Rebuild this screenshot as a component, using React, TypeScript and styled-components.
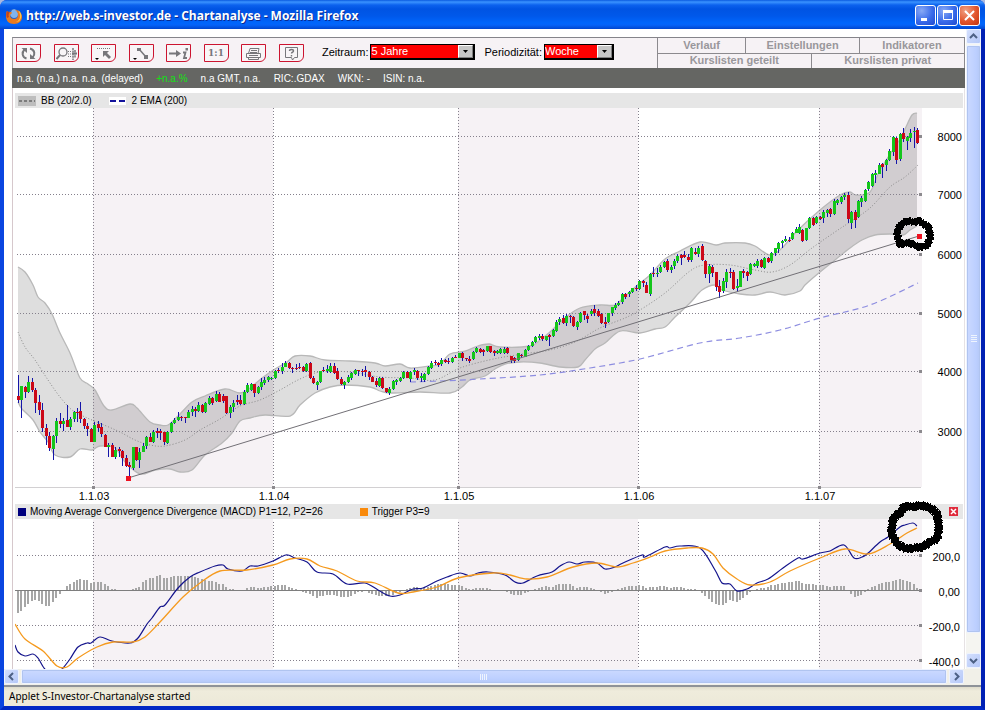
import React from "react";
import styled, { createGlobalStyle } from "styled-components";

const GlobalStyle = createGlobalStyle`
  *, *::before, *::after { box-sizing: border-box; }
  body {
    margin: 0;
    background: #a9b8e0;
    font-family: "Liberation Sans", Arial, sans-serif;
    font-size: 11px;
    color: #000;
  }
  button, select { font: inherit; margin: 0; padding: 0; border: 0; border-radius: 0; }
`;

/* ---------- window frame ---------- */

const Window = styled.div`
  display: flex;
  flex-direction: column;
  height: 100vh;
  min-height: 400px;
  overflow: hidden;
  border-radius: 7px 7px 0 0;
  background: #0a3fdc;
`;

const TitleBar = styled.header`
  display: flex;
  align-items: center;
  flex: none;
  height: 29px;
  padding: 2px 5px 0 6px;
  gap: 4px;
  background: linear-gradient(
    #0a5ae0 0, #3a93ff 2px, #0c62ee 5px, #0054e3 9px, #0058ea 16px, #0066fc 23px, #0563f8 25px, #0046cf 29px
  );
`;

const Title = styled.h1`
  flex: 1;
  margin: 0;
  overflow: hidden;
  white-space: nowrap;
  font: bold 12px/18px "Open Sans", "Noto Sans", sans-serif;
  color: #fff;
  text-shadow: 1px 1px 0 #0b2a91;
`;

const WindowButtons = styled.div`
  display: flex;
  gap: 1px;
`;

const WindowButton = styled.button<{ $close?: boolean }>`
  display: grid;
  place-items: center;
  width: 21px;
  height: 21px;
  border: 1px solid #fff;
  border-radius: 3px;
  background: ${(p) =>
    p.$close
      ? "radial-gradient(circle at 30% 25%, #f0a184, #e2552c 55%, #c2350f)"
      : "radial-gradient(circle at 30% 25%, #88a9f5, #3a6bea 55%, #1d49cf)"};
`;

const WindowBody = styled.div`
  display: flex;
  flex-direction: column;
  flex: 1;
  min-height: 0;
  border: 4px solid #0a3fdc;
  border-top: 0;
  border-color: #0a3fdc #0020b4 #0028c4 #0a45e0;
  background: #fff;
`;

const Viewport = styled.div`
  display: flex;
  flex: 1;
  min-height: 0;
`;

const Page = styled.main`
  flex: 1;
  min-width: 0;
  overflow: hidden;
  padding: 8px 1px 0 8px;
  background: #fff;
`;

/* ---------- scroll bars ---------- */

const VerticalBar = styled.div`
  display: flex;
  flex-direction: column;
  flex: none;
  width: 15px;
  padding-bottom: 1px;
  background: #f5f5f1;
`;

const HorizontalBar = styled.div`
  display: flex;
  flex: none;
  height: 16px;
  padding: 0 17px 1px 0;
  background: #f1f0e8;
`;

const ArrowButton = styled.button`
  display: grid;
  place-items: center;
  flex: none;
  width: 15px;
  height: 15px;
  border: 1px solid #eef3ff;
  border-radius: 2px;
  background: linear-gradient(135deg, #d3dffd, #b5c8f8);
`;

const Thumb = styled.div<{ $vertical?: boolean }>`
  display: flex;
  align-items: center;
  justify-content: center;
  flex: 1;
  margin: ${(p) => (p.$vertical ? "1px 0 20px" : "0 2px")};
  border: 1px solid #eef3ff;
  outline: 1px solid #b0c4f0;
  outline-offset: -2px;
  border-radius: 2px;
  background: linear-gradient(${(p) => (p.$vertical ? "90deg" : "180deg")}, #cbd9ff, #bccfff 70%, #b4c8f6);
`;

/* ---------- applet toolbar ---------- */

const Toolbar = styled.div`
  display: flex;
  height: 31px;
  border-top: 1px solid #85848a;
  border-left: 1px solid #a09ea2;
  background: #f6f2f5;
`;

const ToolGrid = styled.div`
  display: grid;
  grid-template-columns: repeat(8, 1fr);
  align-items: center;
  flex: none;
  width: 300px;
  margin-left: 3px;
`;

const ToolButton = styled.button`
  display: grid;
  place-items: center;
  width: 25px;
  height: 18px;
  border: 1px solid #cc1430;
  border-radius: 0 0 6px 0;
  background: #f8f5f7;
  color: #77777b;
`;

const Ratio = styled.span`
  font: bold 9px/14px "DejaVu Serif", "Liberation Serif", serif;
`;

const Field = styled.div`
  display: flex;
  align-items: center;
  gap: 2px;
  margin: 0 3px 0 6px;
  padding-bottom: 2px;
`;

const FieldLabel = styled.label`
  white-space: nowrap;
`;

const SelectBox = styled.div<{ $width: number }>`
  display: flex;
  position: relative;
  width: ${(p) => p.$width}px;
  height: 16px;
  border: 1px solid #000;
  border-right-width: 2px;
  border-bottom-width: 2px;
`;

const Select = styled.select`
  appearance: none;
  flex: 1;
  min-width: 0;
  height: 13px;
  line-height: 13px;
  background: #fe0000;
  color: #fff;
`;

const SelectArrow = styled.span`
  position: absolute;
  right: 0;
  top: 0;
  display: grid;
  place-items: center;
  width: 15px;
  height: 13px;
  border: 1px solid;
  border-color: #fff #808080 #808080 #fff;
  background: #c6c6c6;
  pointer-events: none;
`;

const Tabs = styled.nav`
  flex: none;
  width: 308px;
  margin-left: auto;
  border-left: 1px solid #8c8a8e;
  border-right: 1px solid #8c8a8e;
`;

const TabRow = styled.div`
  display: flex;
  height: 15px;

  & + & { border-top: 1px solid #8c8a8e; }
`;

const Tab = styled.button<{ $grow: number }>`
  flex: ${(p) => p.$grow} 1 0;
  padding-bottom: 2px;
  line-height: 12px;
  font-weight: bold;
  color: #99979b;
  background: transparent;

  & + & { border-left: 1px solid #8c8a8e; }
`;

const InfoBar = styled.div`
  display: flex;
  align-items: center;
  gap: 13px;
  height: 20px;
  padding-left: 5px;
  font-size: 10px;
  white-space: nowrap;
  background: #656663;
  color: #fff;
`;

const Change = styled.span`
  color: #12e212;
`;

/* ---------- charts ---------- */

const Charts = styled.section`
  position: relative;
  padding: 5px 1px 0 2px;
  border-left: 1px solid #d6c8cc;
  border-right: 1px solid #e6e2e4;
`;

const Legend = styled.div`
  display: flex;
  align-items: center;
  height: 15px;
  padding: 0 5px 0 3px;
  font-size: 10px;
  background: #e6e6e6;
`;

const LegendItem = styled.span<{ $gap: number }>`
  display: flex;
  align-items: center;
  gap: ${(p) => p.$gap}px;
  margin-right: 17px;
  white-space: nowrap;
`;

const TriggerItem = styled(LegendItem)`
  padding-left: 20px;
`;

const Swatch = styled.i<{ $color: string }>`
  width: 8px;
  height: 8px;
  background: ${(p) => p.$color};
`;

const CloseIndicator = styled.button`
  display: grid;
  place-items: center;
  width: 9px;
  height: 9px;
  margin-left: auto;
  background: #e02b3c;
`;

const ChartSvg = styled.svg`
  display: block;
  width: 100%;
  height: auto;

  text { font-size: 11px; fill: #000; }
`;

const Annotations = styled.svg`
  position: absolute;
  top: 5px;
  left: 2px;
  width: calc(100% - 3px);
  pointer-events: none;
`;

const StatusBar = styled.footer`
  flex: none;
  height: 21px;
  padding-left: 5px;
  border-top: 2px solid #8e9298;
  font: 10px/18px "Noto Sans", "Open Sans", sans-serif;
  background: linear-gradient(#dedbcb, #efecdc 4px, #ece9d8);
`;

/* ---------- data ---------- */

// One week per entry: direction, then high, body top, body bottom and low on the plot's y scale.
const WEEKS = `
r375,396,400,403 g386,386,400,418 r386,387,392,398 g376,382,392,393 r378,382,390,392 r388,390,403,413
r395,402,410,415 r403,410,428,432 r424,428,436,445 r432,436,448,451 g435,436,449,460 g418,421,436,443
r413,421,424,428 g418,421,424,431 r405,420,427,427 g417,419,427,430 g411,412,419,422 r408,412,413,422
r402,411,419,423 r418,419,426,429 r423,426,429,436 r428,429,442,442 g422,425,442,442 r421,424,428,432
r423,427,434,437 r434,435,447,447 g443,445,447,457 r443,445,457,457 g447,450,457,459 r447,449,451,457
r450,451,458,466 r455,458,466,467 r462,465,467,477 g447,447,468,470 r447,447,460,461 g448,452,460,468
g443,446,452,452 g436,437,446,449 r433,437,442,442 g430,432,442,443 r428,431,433,438 r429,431,433,440
r432,432,442,445 g431,432,443,444 g422,423,432,433 g418,420,423,424 g412,417,420,421 r416,417,418,421
r417,417,418,423 g410,412,418,418 g406,409,412,416 r407,409,411,417 g402,405,411,412 r404,405,412,413
g402,403,412,413 g396,398,404,405 r397,398,403,405 g391,394,401,402 r392,394,402,402 r394,396,401,403
r396,396,413,414 g405,407,413,418 g400,403,407,412 r395,400,402,405 r395,400,404,405 g390,392,404,405
g383,385,392,393 g383,384,390,391 r384,384,393,397 g386,387,393,394 g378,382,387,390 g377,380,383,385
g376,377,380,382 g377,378,379,380 g370,371,378,379 r368,370,371,373 g363,367,371,374 g361,363,367,367
r362,363,368,369 r367,368,369,373 r364,368,369,370 r363,367,368,369 r366,367,371,372 g363,364,371,372
r362,363,378,379 r376,378,383,384 g381,382,385,390 g371,371,382,383 r367,370,371,372 g365,369,371,373
g363,366,372,373 r363,366,373,374 r368,371,379,380 r377,379,384,385 g381,382,385,389 g375,377,382,383
g372,373,378,380 g369,370,374,375 r370,370,371,376 r369,371,371,376 r366,370,372,377 r371,372,377,380
r376,377,382,382 r378,381,385,387 g377,378,386,387 r377,378,388,389 r388,388,392,393 g387,389,393,395
g380,381,389,390 g379,380,382,385 g377,378,381,382 g371,372,378,379 r371,372,378,378 g371,372,379,382
g368,370,372,375 r370,371,378,380 g373,376,378,382 g373,374,380,382 g366,367,374,375 g361,363,368,369
r360,362,363,365 r362,363,365,367 g358,360,364,366 r359,360,362,363 r358,361,362,364 g357,358,362,363
r355,357,358,358 g353,353,358,358 r352,353,358,361 r358,358,359,361 r356,359,361,363 g351,352,359,360
g347,348,352,353 r348,349,352,353 r349,350,352,356 g346,346,351,352 r346,346,352,353 r350,351,353,356
g350,351,353,354 g348,349,353,354 g347,349,353,354 r347,348,353,354 r356,356,360,363 r357,358,361,363
g353,353,360,361 r354,355,356,358 g349,350,357,357 g345,346,350,351 g341,342,346,347 g336,337,342,343
g334,336,338,340 r334,336,339,341 g336,336,340,341 r334,335,337,346 g329,330,336,337 g320,322,331,332
g317,319,322,325 r315,318,323,324 g314,316,323,326 r315,316,317,323 r316,317,326,327 g321,322,327,330
g312,313,322,323 r311,311,315,320 r314,316,319,323 g309,311,314,316 r305,309,313,316 r309,311,316,317
r313,314,323,324 r317,322,324,328 g313,313,322,323 g307,307,313,316 g303,305,308,310 g301,303,305,306
g293,294,302,304 r293,294,297,299 g291,292,294,297 g288,288,292,293 r285,288,289,291 g280,281,289,290
r280,281,283,287 r282,285,293,293 g273,274,294,296 r267,273,274,277 g268,273,274,277 g265,267,272,273
g261,262,267,268 r259,261,270,272 g265,267,270,273 g259,261,266,269 g254,256,261,263 r254,255,258,265
r251,255,257,258 r254,257,260,262 g247,248,260,262 r248,252,254,255 g246,248,254,257 r244,246,260,261
r260,261,274,278 g264,266,274,283 r265,267,273,277 r272,272,287,291 r280,286,292,298 g278,281,291,293
g269,272,282,288 r268,272,273,278 r270,272,289,290 g279,286,288,292 g271,271,287,287 r269,271,273,278
r271,272,276,281 g263,264,274,275 g263,264,266,267 g259,261,266,268 r259,260,267,268 g257,258,268,269
r257,258,262,263 g252,253,261,263 g248,248,253,256 g242,243,249,253 g240,241,243,248 g236,239,241,242
r237,240,241,242 g232,233,239,240 g227,229,233,233 g224,227,233,234 r229,230,241,242 g228,228,240,241
g217,218,228,229 r217,218,225,226 g216,217,223,224 r216,217,219,220 g210,212,218,223 g209,210,213,217
r208,209,214,217 g199,201,214,215 g199,200,203,205 g196,197,202,204 g193,195,197,200 r192,195,219,223
g211,212,223,229 r210,212,220,228 g200,201,217,218 g196,198,202,207 g189,190,201,202 g181,182,189,191
g173,174,186,187 g170,173,175,183 g163,165,174,174 r163,164,167,178 g159,160,165,171 g149,151,160,161
g136,137,152,156 r137,138,160,164 g133,134,159,161 r128,133,139,142 g136,137,141,150 g129,133,138,142
g127,131,132,148 r128,130,143,144`
  .trim()
  .split(/\s+/)
  .map((w) => ({ up: w[0] === "g", v: w.slice(1).split(",").map(Number) }));

const FIRST_X = 18;
const LAST_X = 917;
const weekX = (i: number) => Math.round(FIRST_X + (i * (LAST_X - FIRST_X)) / (WEEKS.length - 1));

const parse = (s: string) => s.split(" ").map((p) => p.split(",").map(Number));

const BAND_UPPER = parse(
  "18,267 25,272 33,285 38,297 45,303 52,314 60,333 70,353 80,378 88,384 95,390 104,406 112,410 130,404 137,408 150,422 160,425 168,425 178,416 192,402 205,396 225,389 240,393 250,388 262,378 275,369 287,362 295,356 310,356 325,360 350,361 375,363 385,366 400,364 410,368 430,366 440,364 450,354 465,351 478,346 489,344 500,347 530,346 540,340 550,332 565,318 580,308 600,305 615,305 625,296 640,283 650,275 665,259 680,251 700,242 716,245 725,243 745,243 755,246 770,255 782,248 797,231 820,210 840,195 850,192 856,195 870,192 880,170 900,139 905,129 912,115 917,113"
);
const BAND_LOWER = parse(
  "18,402 22,409 33,420 40,432 48,442 55,455 70,457 80,449 92,450 100,446 115,448 125,462 140,474 155,470 170,469 180,472 192,470 205,455 222,443 232,433 240,421 250,418 265,415 290,416 300,405 315,393 330,387 345,385 370,387 380,391 390,393 420,392 450,393 462,387 470,380 485,376 495,369 505,364 520,362 540,363 560,367 578,367 585,360 595,349 605,343 620,331 640,333 655,329 665,327 675,317 690,303 702,290 715,285 722,290 740,294 755,295 770,292 785,295 800,291 805,285 820,272 835,260 850,248 862,240 875,235 890,234 903,235 910,230 917,226"
);
const BAND_MIDDLE = parse(
  "18,332 25,347 35,360 48,380 60,397 72,410 85,417 104,425 120,432 135,440 150,445 165,446 185,440 200,430 220,419 240,406 260,400 280,390 300,379 320,372 350,372 380,377 410,378 435,380 460,368 489,360 510,356 530,353 550,350 575,342 600,328 625,318 640,310 665,293 690,271 705,265 730,265 755,270 772,272 790,265 812,248 835,232 850,222 870,208 890,187 905,177 918,165"
);
const EMA = parse(
  "410,382 440,381 480,379 540,375 590,368 640,359 700,343 740,338 780,330 820,318 870,305 918,283"
);
const MACD = parse(
  "15,645 18,652 25,656 33,654 38,658 44,668 50,674 57,673 63,668 70,659 78,647 87,643 91,643 100,637 112,641 130,643 138,638 147,624 152,618 160,607 165,605 178,588 190,577 200,572 215,566 223,565 228,569 242,571 250,566 258,566 273,561 286,555 295,558 307,562 317,572 333,574 347,584 365,583 378,590 390,596 400,595 413,589 423,588 437,581 447,577 460,573 470,576 478,573 488,572 505,575 515,582 523,583 537,576 552,572 560,566 569,562 577,564 585,562 597,563 605,569 615,567 623,563 642,555 645,557 665,547 670,548 680,546 700,548 715,570 722,583 730,584 737,591 747,589 757,583 768,579 783,568 798,558 803,559 820,553 830,551 844,545 854,558 862,557 867,554 880,542 888,537 900,527 905,525 913,523 917,526"
);
const TRIGGER = parse(
  "15,624 25,639 43,651 57,666 67,667 78,658 97,647 113,642 133,642 145,637 160,622 183,597 200,583 220,571 247,570 273,565 290,559 307,559 320,566 337,571 357,581 375,583 398,593 413,592 437,587 458,578 493,573 510,575 527,579 547,577 573,567 597,563 617,567 633,563 650,557 665,551 687,548 702,548 713,554 723,568 737,579 750,585 770,582 790,571 820,558 845,549 868,554 890,544 907,533 917,528"
);

// Curve through every point, with tangents taken from the neighbours.
const curve = (points: number[][], start = "M") =>
  points
    .map(([x, y], i) => {
      if (i === 0) return `${start}${x} ${y}`;
      const before = points[Math.max(0, i - 2)];
      const prev = points[i - 1];
      const next = points[Math.min(points.length - 1, i + 1)];
      const c1 = [prev[0] + (x - before[0]) / 6, prev[1] + (y - before[1]) / 6];
      const c2 = [x - (next[0] - prev[0]) / 6, y - (next[1] - prev[1]) / 6];
      return `C${c1[0]} ${c1[1]} ${c2[0]} ${c2[1]} ${x} ${y}`;
    })
    .join("");

const BAND_AREA = `${curve(BAND_UPPER)}${curve([...BAND_LOWER].reverse(), "L")}Z`;

const valueAt = (points: number[][], x: number) => {
  const i = Math.max(1, points.findIndex((p) => p[0] >= x));
  const [x0, y0] = points[i - 1];
  const [x1, y1] = points[i];
  return y0 + ((y1 - y0) * (x - x0)) / (x1 - x0);
};

const HISTOGRAM = WEEKS.map((_, i) => {
  const x = weekX(i);
  return { x, h: Math.round(valueAt(TRIGGER, x) - valueAt(MACD, x)) };
});

const YEARS = [
  { x: 93, label: "1.1.03" },
  { x: 273, label: "1.1.04" },
  { x: 458, label: "1.1.05" },
  { x: 638, label: "1.1.06" },
  { x: 819, label: "1.1.07" },
];
const SHADED = [
  [93, 180],
  [458, 180],
  [819, 103],
];
const PRICES = [
  { y: 136, label: "8000" },
  { y: 194, label: "7000" },
  { y: 254, label: "6000" },
  { y: 313, label: "5000" },
  { y: 371, label: "4000" },
  { y: 431, label: "3000" },
];
const LEVELS = [
  { y: 555, label: "200,0" },
  { y: 590, label: "0,00" },
  { y: 625, label: "-200,0" },
  { y: 660, label: "-400,0" },
];

// Hand-drawn rings around the trend line's end and the latest MACD value.
const RINGS = [
  {
    width: 7,
    d: "M900 226l3-3 5-2 6 1 5-1 6 4 4 2 1 11-3 8-8 1-9-4-10 1-2-6-1-6z",
  },
  {
    width: 8,
    d: "M893 520l3-5 4-2 3-5 4-2 7 1 6-2 11 3 6 6 2 13-2 12-7 3-7 5-9 1-8 1-9-5-6-11 1-6z",
  },
];

function YearBands({ top, height }: { top: number; height: number }) {
  return (
    <>
      {SHADED.map(([x, w]) => (
        <rect key={x} x={x} y={top} width={w} height={height} fill="#f6f2f5" />
      ))}
    </>
  );
}

function Grid({ rows, top, bottom }: { rows: number[]; top: number; bottom: number }) {
  return (
    <g stroke="#85808c" strokeDasharray="1 2" shapeRendering="crispEdges">
      {rows.map((y) => (
        <line key={y} x1="17" x2="920" y1={y + 0.5} y2={y + 0.5} />
      ))}
      {YEARS.map(({ x }) => (
        <line key={x} x1={x + 0.5} x2={x + 0.5} y1={top} y2={bottom} />
      ))}
    </g>
  );
}

function PriceChart() {
  return (
    <ChartSvg viewBox="15 108 948 396" role="img" aria-label="Kursverlauf">
      <defs>
        <clipPath id="shaded-years">
          {SHADED.map(([x, w]) => (
            <rect key={x} x={x} y="108" width={w} height="380" />
          ))}
        </clipPath>
      </defs>
      <YearBands top={108} height={379} />
      <path d={BAND_AREA} fill="#000" fillOpacity="0.13" />
      <path d={BAND_AREA} fill="#000" fillOpacity="0.02" clipPath="url(#shaded-years)" />
      <path d={curve(BAND_UPPER)} fill="none" stroke="#b8b8b8" strokeWidth="1.3" />
      <path d={curve(BAND_LOWER)} fill="none" stroke="#b8b8b8" strokeWidth="1.3" />
      <Grid rows={PRICES.map((p) => p.y)} top={108} bottom={487} />
      <line x1="15" x2="921" y1="487.5" y2="487.5" stroke="#d2d0d2" />
      <path d={curve(BAND_MIDDLE)} fill="none" stroke="#8a8a8a" strokeDasharray="1 2" />
      <path d={curve(EMA)} fill="none" stroke="#8d8de0" strokeWidth="1.2" strokeDasharray="6 4" />
      <g shapeRendering="crispEdges">
        {WEEKS.map(({ up, v: [high, top, bottom, low] }, i) => (
          <g key={i}>
            <rect x={weekX(i)} y={high} width="1" height={low - high} fill="#1515a8" />
            <rect
              x={weekX(i) - 1}
              y={top}
              width="3"
              height={Math.max(1, bottom - top)}
              fill={up ? "#14c61c" : "#cc0818"}
            />
          </g>
        ))}
      </g>
      <line x1="128" y1="478" x2="919" y2="236" stroke="#727076" />
      <rect x="126" y="476" width="5" height="5" fill="#ee1020" />
      <rect x="917" y="234" width="5" height="5" fill="#ee1020" />
      {PRICES.map(({ y, label }) => (
        <g key={label}>
          <rect x="919" y={y - 1} width="3" height="3" fill="#8c8a8e" />
          <text x="962" y={y + 5} textAnchor="end">{label}</text>
        </g>
      ))}
      {YEARS.map(({ x, label }) => (
        <g key={label}>
          <rect x={x - 1} y="486" width="3" height="3" fill="#8c8a8e" />
          <text x={x + 1} y="500" textAnchor="middle">{label}</text>
        </g>
      ))}
    </ChartSvg>
  );
}

function MacdChart() {
  return (
    <ChartSvg viewBox="15 519 948 150" role="img" aria-label="MACD">
      <YearBands top={519} height={150} />
      <Grid rows={[555, 625, 660]} top={522} bottom={669} />
      <g fill="#a6a6a6" shapeRendering="crispEdges">
        {HISTOGRAM.map(({ x, h }) => (
          <rect key={x} x={x - 1} y={h > 0 ? 590 - h : 590} width="2" height={Math.abs(h)} />
        ))}
      </g>
      <line x1="15" x2="920" y1="590.5" y2="590.5" stroke="#7e7e7e" />
      <path d={curve(MACD)} fill="none" stroke="#14148c" strokeWidth="1.2" />
      <path d={curve(TRIGGER)} fill="none" stroke="#f59a1e" strokeWidth="1.3" />
      {LEVELS.map(({ y, label }) => (
        <g key={label}>
          <rect x="919" y={y - 1} width="3" height="3" fill="#8c8a8e" />
          <text x="960" y={y + 6} textAnchor="end">{label}</text>
        </g>
      ))}
    </ChartSvg>
  );
}

/* ---------- icons ---------- */

const Icon = ({ children, w = 21 }: { children: React.ReactNode; w?: number }) => (
  <svg width={w} height="15" viewBox={`0 0 ${w} 15`} fill="none" stroke="currentColor" aria-hidden="true">
    {children}
  </svg>
);

const TOOLS: { name: string; icon: React.ReactNode }[] = [
  {
    name: "Aktualisieren",
    icon: (
      <Icon>
        <path d="M8.5 12.5C4 11 3.500 6.500 6.500 3.500" strokeWidth="2" />
        <path d="M3.500 2H9v5z" fill="currentColor" stroke="none" />
        <path d="M12 2.500c5 1.500 5.500 6 2.500 9" strokeWidth="2" />
        <path d="M17.500 13H12V8z" fill="currentColor" stroke="none" />
      </Icon>
    ),
  },
  {
    name: "Zoom",
    icon: (
      <Icon>
        <circle cx="7" cy="6" r="4" strokeWidth="1.300" />
        <path d="M4 9L.500 13" strokeWidth="2" />
        <path d="M12.500 5v6M14.500 5v6" strokeDasharray="1 1.500" />
        <path d="M17 2v12M19 4v8" strokeWidth="1.500" strokeDasharray="2 .6" />
        <path d="M16 7.500h5" strokeWidth="2" />
      </Icon>
    ),
  },
  {
    name: "Auswahl",
    icon: (
      <Icon>
        <path d="M4 2.500h14" strokeDasharray="1 1" />
        <path d="M10 5h6l-2 2 4 4-2 2-4-4-2 2z" fill="currentColor" stroke="none" />
        <path d="M2 12h4l-2 2z" fill="#000" stroke="none" />
      </Icon>
    ),
  },
  {
    name: "Linie",
    icon: (
      <Icon>
        <path d="M8 3l7 8" strokeWidth="1.500" />
        <path d="M6 2h4v3H6zM13 9h4v4h-4z" fill="currentColor" stroke="none" />
        <path d="M2 12h4l-2 2z" fill="#000" stroke="none" />
      </Icon>
    ),
  },
  {
    name: "Information",
    icon: (
      <Icon>
        <path d="M1 7.500h9" strokeWidth="2" />
        <path d="M8 4l5 3.500L8 11z" fill="currentColor" stroke="none" />
        <path d="M15 6.500h2.500l-1.500 5.500h3" strokeWidth="1.800" />
        <path d="M17.500 2h2.500v2.500h-2.500z" fill="currentColor" stroke="none" />
      </Icon>
    ),
  },
  { name: "Originalgröße", icon: <Ratio>1:1</Ratio> },
  {
    name: "Drucken",
    icon: (
      <Icon>
        <path d="M5.500 7.500l1.500-5h9l-1 5M8 4.500h6M7 6.500h7M3.500 7.500h14v4h-14zM5.500 11.500v2h10v-2M6 9.500h9" />
      </Icon>
    ),
  },
  {
    name: "Hilfe",
    icon: (
      <Icon>
        <path d="M4.500 1.500h12v10h-3l-2 2.500-1-2.500h-6z" />
        <path d="M8.500 5c0-2 4-2 4 0 0 1.500-2 1-2 2.500M10.500 9v1.500" strokeWidth="1.400" />
      </Icon>
    ),
  },
];

const Browser = () => (
  <svg width="16" height="16" viewBox="0 0 16 16" aria-hidden="true">
    <circle cx="8" cy="8" r="7" fill="#2a62c4" />
    <path d="M6 2c3-2 6 1 6 4s-2 4-4 4-4-2-4-4z" fill="#7fb4ee" />
    <path
      d="M1 3c1 1 2 1 3 1 1 0 2 0 2 1L4 7c0 3 2 4 4 4 3 0 4-2 4-4 0-2-1-4-3-5 4 0 7 3 7 7 0 4-3 7-8 7S0 13 0 8c0-2 0-4 1-5z"
      fill="#ea7a1c"
    />
    <path d="M12 2c3 2 4 5 3 8-1 3-3 4-5 4 3-1 4-4 4-6 0-3-1-4-2-6z" fill="#fbc84a" />
    <path d="M1 3c-1 2-1 5 0 7l2-1c-1-2 0-4 1-5-1 0-2 0-3-1z" fill="#c2451a" />
  </svg>
);

const Chevron = ({ d }: { d: string }) => (
  <svg width="9" height="9" viewBox="0 0 9 9" fill="none" stroke="#4d6185" strokeWidth="2" aria-hidden="true">
    <path d={d} />
  </svg>
);

const Triangle = () => (
  <svg width="7" height="4" viewBox="0 0 7 4" aria-hidden="true">
    <path d="M1 0h5L3.500 3z" fill="#000" />
  </svg>
);

const Grip = ({ vertical }: { vertical?: boolean }) => (
  <svg width="8" height="8" viewBox="0 0 8 8" aria-hidden="true">
    <path
      d={vertical ? "M1 .5h6M1 2.500h6M1 4.500h6M1 6.500h6" : "M.5 1v6M2.500 1v6M4.500 1v6M6.500 1v6"}
      stroke="#eef4fe"
    />
  </svg>
);

export default function App() {
  return (
    <>
      <GlobalStyle />
      <Window>
        <TitleBar>
          <Browser />
          <Title>http://web.s-investor.de - Chartanalyse - Mozilla Firefox</Title>
          <WindowButtons>
            <WindowButton aria-label="Minimieren">
              <svg width="13" height="13" viewBox="0 0 13 13"><path d="M2 9h6v3H2z" fill="#fff" /></svg>
            </WindowButton>
            <WindowButton aria-label="Maximieren">
              <svg width="13" height="13" viewBox="0 0 13 13">
                <path d="M2.500 2.500h9v8h-9z" fill="none" stroke="#fff" />
                <path d="M2 1h10v3H2z" fill="#fff" />
              </svg>
            </WindowButton>
            <WindowButton $close aria-label="Schließen">
              <svg width="13" height="13" viewBox="0 0 13 13">
                <path d="M2 2l9 9M11 2l-9 9" stroke="#fff" strokeWidth="2" />
              </svg>
            </WindowButton>
          </WindowButtons>
        </TitleBar>
        <WindowBody>
          <Viewport>
            <Page>
              <Toolbar>
                <ToolGrid>
                  {TOOLS.map((t) => (
                    <ToolButton key={t.name} aria-label={t.name}>{t.icon}</ToolButton>
                  ))}
                </ToolGrid>
                <Field>
                  <FieldLabel htmlFor="zeitraum">Zeitraum:</FieldLabel>
                  <SelectBox $width={105}>
                    <Select id="zeitraum" defaultValue="5 Jahre">
                      <option>5 Jahre</option>
                    </Select>
                    <SelectArrow><Triangle /></SelectArrow>
                  </SelectBox>
                </Field>
                <Field>
                  <FieldLabel htmlFor="periode">Periodizität:</FieldLabel>
                  <SelectBox $width={70}>
                    <Select id="periode" defaultValue="Woche">
                      <option>Woche</option>
                    </Select>
                    <SelectArrow><Triangle /></SelectArrow>
                  </SelectBox>
                </Field>
                <Tabs>
                  <TabRow>
                    <Tab $grow={88}>Verlauf</Tab>
                    <Tab $grow={114}>Einstellungen</Tab>
                    <Tab $grow={105}>Indikatoren</Tab>
                  </TabRow>
                  <TabRow>
                    <Tab $grow={1}>Kurslisten geteilt</Tab>
                    <Tab $grow={1}>Kurslisten privat</Tab>
                  </TabRow>
                </Tabs>
              </Toolbar>
              <InfoBar>
                <span>n.a. (n.a.) n.a. n.a. (delayed)</span>
                <Change>+n.a.%</Change>
                <span>n.a GMT, n.a.</span>
                <span>RIC:.GDAX</span>
                <span>WKN: -</span>
                <span>ISIN: n.a.</span>
              </InfoBar>
              <Charts>
                <Legend>
                  <LegendItem $gap={5}>
                    <svg width="18" height="10" viewBox="0 0 18 10" aria-hidden="true">
                      <rect width="18" height="10" fill="#bdbdbd" />
                      <path d="M1 5h16" stroke="#7c7c7c" strokeWidth="2" strokeDasharray="3 2" />
                    </svg>
                    BB (20/2.0)
                  </LegendItem>
                  <LegendItem $gap={6}>
                    <svg width="17" height="10" viewBox="0 0 17 10" aria-hidden="true">
                      <rect y="1" width="17" height="8" fill="#fff" />
                      <path d="M1 5h15" stroke="#14149c" strokeWidth="2" strokeDasharray="6 3" />
                    </svg>
                    2 EMA (200)
                  </LegendItem>
                </Legend>
                <PriceChart />
                <Legend>
                  <LegendItem $gap={4}>
                    <Swatch $color="#00007e" />
                    Moving Average Convergence Divergence (MACD) P1=12, P2=26
                  </LegendItem>
                  <TriggerItem $gap={4}>
                    <Swatch $color="#f98a0c" />
                    Trigger P3=9
                  </TriggerItem>
                  <CloseIndicator aria-label="Indikator schließen">
                    <svg width="7" height="7" viewBox="0 0 7 7">
                      <path d="M1 1l5 5M6 1L1 6" stroke="#fff" strokeWidth="1.500" />
                    </svg>
                  </CloseIndicator>
                </Legend>
                <MacdChart />
                <Annotations
                  viewBox="15 93 948 576"
                  fill="none"
                  stroke="#000"
                  strokeLinejoin="round"
                  shapeRendering="crispEdges"
                  aria-hidden="true"
                >
                  {RINGS.map(({ d, width }) => (
                    <g key={d}>
                      <path d={d} strokeWidth={width - 1} />
                      <path d={d} strokeWidth={width + 1} strokeDasharray="2 1 1 2 3 1" />
                    </g>
                  ))}
                </Annotations>
              </Charts>
            </Page>
            <VerticalBar>
              <ArrowButton aria-label="Nach oben"><Chevron d="M1 6l3.500-3.500L8 6" /></ArrowButton>
              <Thumb $vertical><Grip vertical /></Thumb>
              <ArrowButton aria-label="Nach unten"><Chevron d="M1 3l3.500 3.500L8 3" /></ArrowButton>
            </VerticalBar>
          </Viewport>
          <HorizontalBar>
            <ArrowButton aria-label="Nach links"><Chevron d="M6 1L2.500 4.500L6 8" /></ArrowButton>
            <Thumb><Grip /></Thumb>
            <ArrowButton aria-label="Nach rechts"><Chevron d="M3 1l3.500 3.500L3 8" /></ArrowButton>
          </HorizontalBar>
          <StatusBar>Applet S-Investor-Chartanalyse started</StatusBar>
        </WindowBody>
      </Window>
    </>
  );
}
